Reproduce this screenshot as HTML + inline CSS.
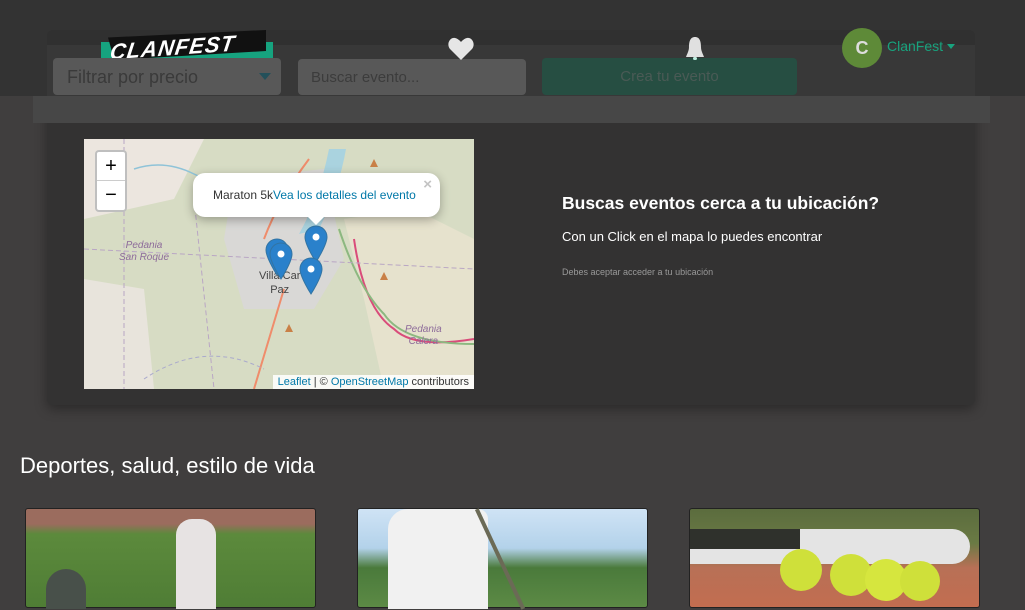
<!DOCTYPE html>
<html><head><meta charset="utf-8"><style>
*{margin:0;padding:0;box-sizing:border-box}
body{width:1025px;height:599px;overflow:hidden;background:#403e3e;font-family:"Liberation Sans",sans-serif;position:relative}
.abs{position:absolute}
.pin{position:absolute;width:24px;height:38px}
</style></head><body>
<div class="abs" style="left:47px;top:96px;width:928px;height:309px;background:#333232;border-radius:6px;box-shadow:0 4px 12px rgba(0,0,0,.35)"></div>
<div class="abs" style="left:33px;top:96px;width:957px;height:27px;background:#474747"></div>
<div class="abs" style="left:0;top:0;width:1025px;height:96px;background:#333333"></div>
<div class="abs" style="left:47px;top:30px;width:928px;height:16px;background:#303030;border-radius:6px 6px 0 0"></div>
<div class="abs" style="left:47px;top:45px;width:928px;height:51px;background:#383838"></div>
<!-- logo -->
<div class="abs" style="left:101px;top:42px;width:172px;height:18px;background:#16a37f"></div>
<div class="abs" style="left:108px;top:30px;width:158px;height:30px;background:#111;clip-path:polygon(0 25%,100% 0,100% 70%,4% 100%)"></div>
<div class="abs" style="left:110px;top:35px;font:italic bold 22px 'Liberation Sans',sans-serif;color:#fff;letter-spacing:1px;transform:rotate(-4deg) skewX(-12deg)">CLANFEST</div>
<div class="abs" style="left:53px;top:58px;width:228px;height:37px;background:#585858;border-radius:4px;color:#3a3a3a;font-size:18px;padding:9px 14px">Filtrar por precio</div>
<div class="abs" style="left:259px;top:73px;width:0;height:0;border-left:6px solid transparent;border-right:6px solid transparent;border-top:7px solid #23505a"></div>
<div class="abs" style="left:298px;top:59px;width:228px;height:36px;background:#585858;border-radius:4px;color:#3c3c3c;font-size:15px;padding:10px 13px">Buscar evento...</div>
<div class="abs" style="left:542px;top:58px;width:255px;height:37px;background:#264e42;border-radius:4px;color:#4a5a55;font-size:15px;text-align:center;padding-top:10px">Crea tu evento</div>
<svg class="abs" style="left:448px;top:37px" width="26" height="24" viewBox="0 0 26 24"><path d="M13 23 L2 12 C-2 7 2 0 7 1 C10 1.5 12 4 13 5 C14 4 16 1.5 19 1 C24 0 28 7 24 12 Z" fill="#e6e6e6"/></svg>
<svg class="abs" style="left:683px;top:36px" width="24" height="26" viewBox="0 0 24 26"><path d="M12 1 C7 1 6 6 6 11 C6 15 4 18 3 21 L21 21 C20 18 18 15 18 11 C18 6 17 1 12 1Z" fill="#e0e0e0"/><rect x="10" y="21" width="4" height="3" rx="1.5" fill="#bfeee0"/></svg>
<div class="abs" style="left:842px;top:28px;width:40px;height:40px;border-radius:50%;background:#5e8a38;color:#ddd;font-size:18px;font-weight:bold;text-align:center;line-height:40px">C</div>
<div class="abs" style="left:887px;top:38px;color:#18a37e;font-size:14px">ClanFest</div>
<div class="abs" style="left:947px;top:44px;border-left:4px solid transparent;border-right:4px solid transparent;border-top:5px solid #18a37e"></div>
<!-- map -->
<div class="abs" style="left:84px;top:139px;width:390px;height:250px;overflow:hidden;background:#dcd9cf">
<svg width="390" height="250" style="position:absolute;left:0;top:0">
<rect width="390" height="250" fill="#d7dcc4"/>
<path d="M0 0 L120 0 L90 60 L0 80Z" fill="#ece6df"/>
<path d="M0 140 L60 150 L70 250 L0 250Z" fill="#e8e4dc"/>
<path d="M150 40 L240 30 L260 120 L230 170 L160 170 L140 100Z" fill="#d9d8d6"/>
<path d="M260 80 L330 70 L390 100 L390 250 L300 250 L280 160Z" fill="#e6e2cd"/>
<path d="M270 100 Q280 170 310 190 Q330 210 390 200" stroke="#d94c7a" stroke-width="2" fill="none"/>
<path d="M255 90 Q275 150 300 175 Q320 205 390 205" stroke="#8cb880" stroke-width="2" fill="none"/>
<path d="M245 10 Q235 60 215 95 L235 90 Q255 50 262 10Z" fill="#aad3df"/>
<path d="M180 100 Q195 60 225 20" stroke="#ef8c6b" stroke-width="2" fill="none"/>
<path d="M200 150 Q185 200 170 250" stroke="#ef8c6b" stroke-width="2" fill="none"/>
<path d="M50 30 Q80 20 110 35 T180 40" stroke="#8fc3d8" stroke-width="1.5" fill="none"/>
<path d="M60 240 Q120 200 180 230" stroke="#aac" stroke-width="1" fill="none" stroke-dasharray="4 3"/>
<path d="M40 0 L40 250 M0 110 L390 130 M110 60 L130 250" stroke="#b9a6c4" stroke-width="1" fill="none" stroke-dasharray="5 3"/>
<path d="M290 20 l4 8 h-8z M300 133 l4 8 h-8z M205 185 l4 8 h-8z" fill="#c98047"/>
</svg>
<div class="abs" style="left:35px;top:101px;color:#8d6b9a;font-style:italic;font-size:10px;text-align:center;line-height:12px">Pedania<br>San Roque</div>
<div class="abs" style="left:321px;top:185px;color:#8d6b9a;font-style:italic;font-size:10px;text-align:center;line-height:12px">Pedania<br>Calera</div>
<div class="abs" style="left:175px;top:130px;color:#444;font-size:11px;text-align:center;line-height:14px">Villa Car<br>Paz</div>
<div class="abs" style="left:11px;top:11px;width:32px;height:62px;background:#fff;border:2px solid rgba(0,0,0,.25);border-radius:4px;font-size:20px;text-align:center;line-height:29px;color:#000"><div style="border-bottom:1px solid #ccc;height:29px">+</div><div>−</div></div>
<svg class="pin" style="left:181px;top:99px" viewBox="0 0 24 38"><path d="M12 1a11 11 0 0 1 11 11c0 8-11 25-11 25S1 20 1 12A11 11 0 0 1 12 1z" fill="#2a81cb" stroke="#3274a3"/><circle cx="12" cy="12" r="3.5" fill="#fff"/></svg>
<svg class="pin" style="left:185px;top:103px" viewBox="0 0 24 38"><path d="M12 1a11 11 0 0 1 11 11c0 8-11 25-11 25S1 20 1 12A11 11 0 0 1 12 1z" fill="#2a81cb" stroke="#3274a3"/><circle cx="12" cy="12" r="3.5" fill="#fff"/></svg>
<svg class="pin" style="left:220px;top:86px" viewBox="0 0 24 38"><path d="M12 1a11 11 0 0 1 11 11c0 8-11 25-11 25S1 20 1 12A11 11 0 0 1 12 1z" fill="#2a81cb" stroke="#3274a3"/><circle cx="12" cy="12" r="3.5" fill="#fff"/></svg>
<svg class="pin" style="left:215px;top:118px" viewBox="0 0 24 38"><path d="M12 1a11 11 0 0 1 11 11c0 8-11 25-11 25S1 20 1 12A11 11 0 0 1 12 1z" fill="#2a81cb" stroke="#3274a3"/><circle cx="12" cy="12" r="3.5" fill="#fff"/></svg>
<div class="abs" style="left:109px;top:34px;width:247px;height:44px;background:#fff;border-radius:12px;box-shadow:0 3px 10px rgba(0,0,0,.3);font-size:12px;color:#333;padding:15px 0 0 20px;white-space:nowrap">Maraton 5k<span style="color:#0078a8">Vea los detalles del evento</span><span style="position:absolute;right:8px;top:3px;color:#c3c3c3;font-size:15px;font-weight:bold">×</span></div>
<div class="abs" style="left:223px;top:77px;width:0;height:0;border-left:9px solid transparent;border-right:9px solid transparent;border-top:9px solid #fff"></div>
<div class="abs" style="right:0;bottom:0;background:rgba(255,255,255,.85);font-size:11px;color:#333;padding:1px 5px">
<span style="color:#0078a8">Leaflet</span> | © <span style="color:#0078a8">OpenStreetMap</span> contributors</div>
</div>
<div class="abs" style="left:562px;top:193px;color:#fff;font-size:17.5px;font-weight:bold">Buscas eventos cerca a tu ubicación?</div>
<div class="abs" style="left:562px;top:229px;color:#fff;font-size:13px">Con un Click en el mapa lo puedes encontrar</div>
<div class="abs" style="left:562px;top:267px;color:#999;font-size:9px">Debes aceptar acceder a tu ubicación</div>
<div class="abs" style="left:20px;top:453px;color:#fff;font-size:22px">Deportes, salud, estilo de vida</div>
<div class="abs" style="left:25px;top:508px;width:291px;height:100px;border:1px solid #222;border-radius:3px;background:linear-gradient(#9b6c5e 0,#9b6c5e 15px,#5c8a3c 25px,#4f7d35 100%)"><div style="position:absolute;left:150px;top:10px;width:40px;height:90px;background:#e7e3e3;border-radius:16px 16px 0 0"></div><div style="position:absolute;left:20px;top:60px;width:40px;height:40px;background:#48504a;border-radius:50% 50% 0 0"></div></div>
<div class="abs" style="left:357px;top:508px;width:291px;height:100px;border:1px solid #222;border-radius:3px;background:linear-gradient(#cfe3f5 0,#b3d2ea 40%,#4a7a3b 60%,#5c8a45 100%)"><div style="position:absolute;left:30px;top:0;width:100px;height:100px;background:#f1f1f1;border-radius:20px 10px 0 0"></div><div style="position:absolute;left:140px;top:-5px;width:4px;height:110px;background:#6b6a56;transform:rotate(-25deg)"></div></div>
<div class="abs" style="left:689px;top:508px;width:291px;height:100px;border:1px solid #222;border-radius:3px;background:linear-gradient(#5b6c3e 0,#6a7a44 35%,#b87056 60%,#c26d50 100%)"><div style="position:absolute;left:0;top:20px;width:280px;height:35px;background:#e4e4e4;border-radius:0 30px 30px 0"></div><div style="position:absolute;left:0;top:20px;width:110px;height:20px;background:#2f312c"></div>
<div style="position:absolute;left:90px;top:40px;width:42px;height:42px;border-radius:50%;background:#cfe03a"></div><div style="position:absolute;left:140px;top:45px;width:42px;height:42px;border-radius:50%;background:#cfe03a"></div><div style="position:absolute;left:175px;top:50px;width:42px;height:42px;border-radius:50%;background:#d6e63e"></div><div style="position:absolute;left:210px;top:52px;width:40px;height:40px;border-radius:50%;background:#cfe03a"></div></div>
</body></html>
